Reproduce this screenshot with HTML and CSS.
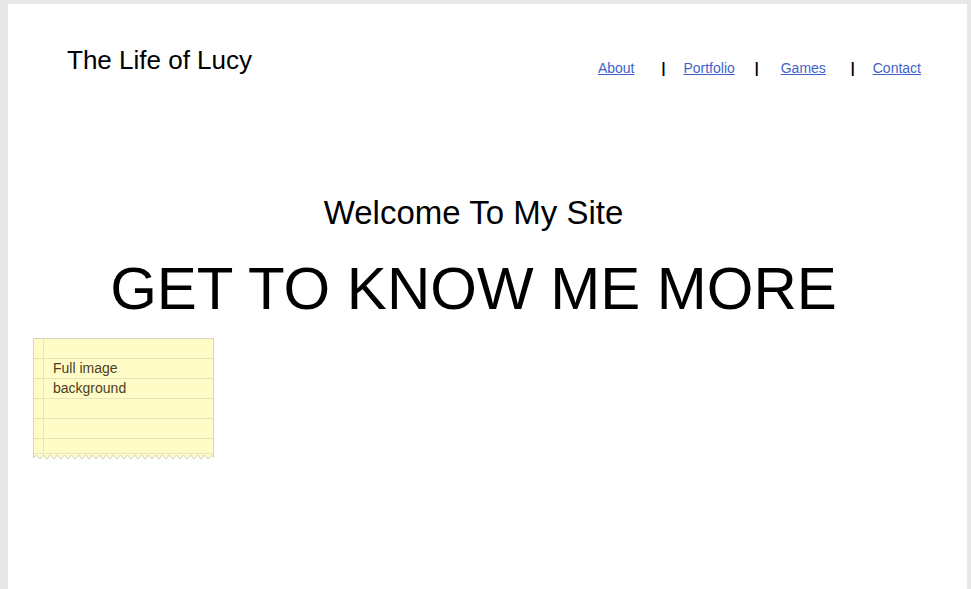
FILE: index.html
```html
<!DOCTYPE html>
<html>
<head>
<meta charset="utf-8">
<title>The Life of Lucy</title>
<link rel="stylesheet" href="styles.css">
</head>
<body>
<div class="page">
  <header class="header">
    <h1 class="site-title">The Life of Lucy</h1>
    <nav class="nav">
      <a href="#" class="nav-link">About</a>
      <span class="sep sep1">|</span>
      <a href="#" class="nav-link l2">Portfolio</a>
      <span class="sep sep2">|</span>
      <a href="#" class="nav-link l3">Games</a>
      <span class="sep sep3">|</span>
      <a href="#" class="nav-link l4">Contact</a>
    </nav>
  </header>
  <section class="hero">
    <h2 class="welcome">Welcome To My Site</h2>
    <h3 class="know">GET TO KNOW ME MORE</h3>
  </section>
  <div class="note-wrap">
    <div class="note">
      <p class="note-text">Full image<br>background</p>
    </div>
    <svg class="zig" width="181" height="9" viewBox="0 0 181 9">
      <polygon fill="#fffcc8" stroke="#d2cfbc" stroke-width="1" points="0.5,0 0.5,5 3.5,2 7,6 10.5,2 14,6 17.5,2 21,6 24.5,2 28,6 31.5,2 35,6 38.5,2 42,6 45.5,2 49,6 52.5,2 56,6 59.5,2 63,6 66.5,2 70,6 73.5,2 77,6 80.5,2 84,6 87.5,2 91,6 94.5,2 98,6 101.5,2 105,6 108.5,2 112,6 115.5,2 119,6 122.5,2 126,6 129.5,2 133,6 136.5,2 140,6 143.5,2 147,6 150.5,2 154,6 157.5,2 161,6 164.5,2 168,6 171.5,2 175,6 178.5,2 180.5,4.5 180.5,0"/>
    </svg>
  </div>
</div>
</body>
</html>
```

FILE: styles.css
```css
html, body {
  margin: 0;
  padding: 0;
  height: 100%;
}
body {
  background: #e8e8e8;
  font-family: "Liberation Sans", Arial, sans-serif;
  padding: 4px 4px 0 8px;
  box-sizing: border-box;
}
.page {
  background: #ffffff;
  min-height: 100%;
  box-sizing: border-box;
  overflow: hidden;
}
.header {
  display: flex;
  justify-content: space-between;
  align-items: flex-start;
}
.site-title {
  margin: 41px 0 0 59px;
  font-size: 26px;
  line-height: 30px;
  font-weight: normal;
  color: #000;
}
.nav {
  display: flex;
  align-items: baseline;
  margin: 56px 46px 0 0;
  font-size: 14px;
  line-height: 16px;
}
.nav-link {
  color: #3f63c8;
  text-decoration: underline;
}
.sep {
  font-weight: bold;
  color: #000;
}
.sep1 { margin-left: 27px; }
.l2 { margin-left: 18px; }
.sep2 { margin-left: 20px; }
.l3 { margin-left: 22px; }
.sep3 { margin-left: 25px; }
.l4 { margin-left: 18px; }
.hero {
  padding-right: 28px;
  text-align: center;
}
.welcome {
  margin: 118px 0 0 0;
  font-size: 33px;
  line-height: 38px;
  font-weight: normal;
  color: #000;
}
.know {
  margin: 22px 0 0 0;
  font-size: 60px;
  line-height: 69px;
  font-weight: normal;
  color: #000;
}
.note-wrap {
  margin: 15px 0 0 25px;
  width: 181px;
}
.note {
  height: 115px;
  box-sizing: border-box;
  border: 1px solid #d9d6bc;
  border-bottom: none;
  background-color: #fffcc8;
  background-image:
    linear-gradient(to right, transparent 9px, #ece4b0 9px, #ece4b0 10px, transparent 10px),
    repeating-linear-gradient(to bottom, transparent 0, transparent 19px, #e8e2b4 19px, #e8e2b4 20px);
  padding: 19px 0 0 19px;
}
.note-text {
  margin: 0;
  font-size: 14px;
  line-height: 20px;
  color: #4d4020;
}
.zig {
  display: block;
}
```
